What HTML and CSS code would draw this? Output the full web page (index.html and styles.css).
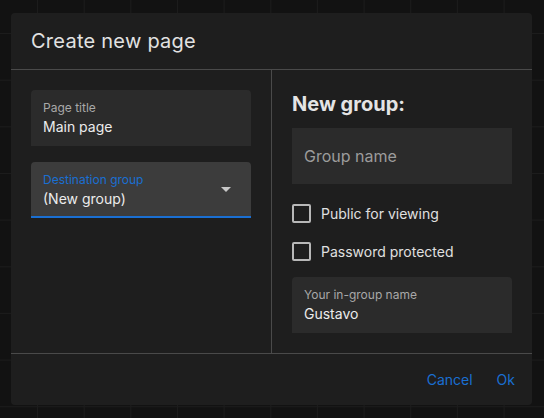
FILE: index.html
```html
<!DOCTYPE html>
<html lang="en">
<head>
<meta charset="utf-8">
<title>Create new page</title>
<link rel="stylesheet" href="styles.css">
</head>
<body>
<div class="dialog">
  <header class="dialog-header">
    <h1 class="dialog-title">Create new page</h1>
  </header>
  <div class="dialog-body">
    <section class="col col-left">
      <div class="field">
        <div class="field-label">Page title</div>
        <div class="field-value">Main page</div>
      </div>
      <div class="field field-select">
        <div class="field-content">
          <div class="field-label field-label-active">Destination group</div>
          <div class="field-value">(New group)</div>
        </div>
        <svg class="select-arrow" width="10" height="5" viewBox="0 0 10 5"><path d="M0 0h10L5 5z" fill="#c8c8c8"/></svg>
      </div>
    </section>
    <section class="col col-right">
      <h2 class="group-heading">New group:</h2>
      <div class="field field-placeholder">
        <span class="placeholder">Group name</span>
      </div>
      <div class="checks">
        <label class="check-row"><span class="checkbox"></span><span class="check-label">Public for viewing</span></label>
        <label class="check-row"><span class="checkbox"></span><span class="check-label">Password protected</span></label>
      </div>
      <div class="field">
        <div class="field-label">Your in-group name</div>
        <div class="field-value">Gustavo</div>
      </div>
    </section>
  </div>
  <footer class="dialog-footer">
    <button class="btn">Cancel</button>
    <button class="btn">Ok</button>
  </footer>
</div>
</body>
</html>
```

FILE: styles.css
```css
* { box-sizing: border-box; }
html, body { margin: 0; height: 100%; }
body {
  background-color: #121212;
  background-image:
    linear-gradient(to right, #1c1c1c 1px, transparent 1px),
    linear-gradient(to bottom, #1c1c1c 1px, transparent 1px);
  background-size: 46.67px 46.67px;
  background-position: 37px 33px;
  font-family: Inter, "Noto Sans", sans-serif;
  padding: 13px 12px 13px 11px;
  overflow: hidden;
}
.dialog {
  width: 521px;
  height: 392px;
  background: #1e1e1e;
  border-radius: 4px;
  display: flex;
  flex-direction: column;
}
.dialog-header {
  height: 57px;
  padding: 0 20px;
  border-bottom: 1px solid #4a4a4a;
  display: flex;
  align-items: center;
}
.dialog-title {
  margin: 0;
  font-size: 20px;
  font-weight: 400;
  letter-spacing: 0.25px;
  color: #e2e2e2;
  line-height: 24px;
  padding-bottom: 1px;
}
.dialog-body {
  display: flex;
  height: 284px;
  border-bottom: 1px solid #4a4a4a;
}
.col {
  width: 260px;
  padding: 20px;
  display: flex;
  flex-direction: column;
}
.col-left {
  border-right: 1px solid #4a4a4a;
  width: 261px;
  gap: 16px;
}
.field {
  height: 56px;
  background: #2b2b2b;
  border-radius: 4px 4px 0 0;
  padding: 10px 12px 0;
}
.field-label {
  font-size: 12px;
  line-height: 16px;
  color: #a8a8a8;
}
.field-label-active { color: #1a6fd2; }
.field-value {
  margin-top: 1px;
  font-size: 14px;
  line-height: 20px;
  color: #ececec;
}
.field-select {
  background: #3c3c3c;
  border-bottom: 2px solid #1a6fd2;
  display: flex;
  align-items: center;
  padding: 0 20px 0 12px;
}
.field-content {
  flex: 1;
  padding-top: 10px;
  align-self: flex-start;
}
.select-arrow { display: block; margin-top: 1px; }
.group-heading {
  margin: 0;
  font-size: 20px;
  font-weight: 700;
  color: #e4e4e4;
  line-height: 22px;
  height: 38px;
  padding-top: 3px;
}
.field-placeholder {
  display: flex;
  align-items: center;
  padding: 0 12px;
  border-radius: 0;
}
.placeholder {
  font-size: 16px;
  color: #9c9c9c;
}
.checks {
  margin: 10px 0 7px;
  display: flex;
  flex-direction: column;
}
.check-row {
  height: 38px;
  display: flex;
  align-items: center;
  gap: 10px;
}
.checkbox {
  width: 19px;
  height: 19px;
  border: 2px solid #b8b8b8;
  border-radius: 2px;
}
.check-label {
  font-size: 14px;
  color: #e0e0e0;
}
.dialog-footer {
  flex: 1;
  display: flex;
  align-items: center;
  justify-content: flex-end;
  gap: 24px;
  padding: 0 17px 0 0;
}
.btn {
  background: none;
  border: 0;
  padding: 0;
  font-family: inherit;
  font-size: 14px;
  color: #1a6fd2;
  cursor: pointer;
}
```
